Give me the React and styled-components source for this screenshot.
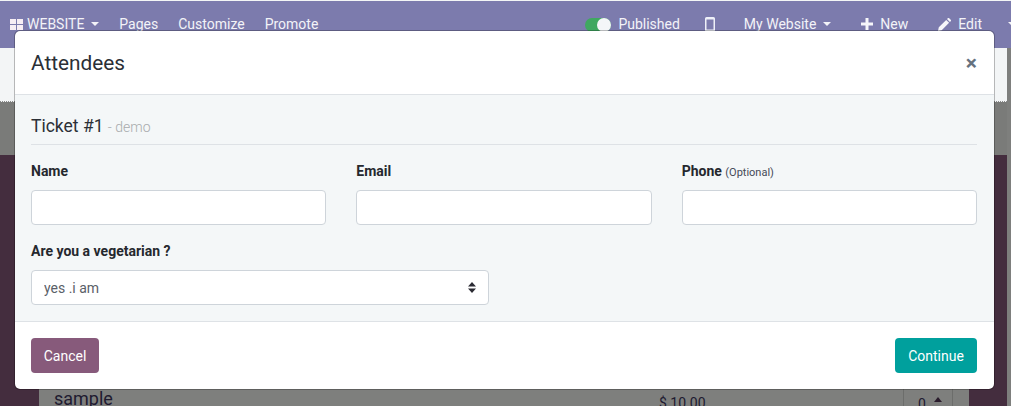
import styled, { createGlobalStyle } from 'styled-components';

const GlobalStyle = createGlobalStyle`
  html, body {
    margin: 0;
    padding: 0;
    background: #fff;
    overflow: hidden;
  }
  * { box-sizing: border-box; }
`;

const Page = styled.div`
  position: relative;
  width: 1011px;
  height: 406px;
  padding-top: 1px;
  overflow: hidden;
  background: #f3f5f6;
  font-family: Roboto, "Liberation Sans", sans-serif;
  font-size: 14px;
  color: #212529;
`;

/* top bar */
const Navbar = styled.nav`
  display: flex;
  align-items: flex-start;
  height: 47px;
  padding: 15px 0 0 10px;
  background: #7c7bad;
  color: #f3f3f8;
  white-space: nowrap;
`;

const NavItem = styled.span`
  display: flex;
  align-items: center;
  gap: ${p => p.$gap || 0}px;
  height: 16px;
  line-height: 16px;
  margin-left: ${p => p.$ml || 0}px;
  flex: none;
`;

const Caret = styled.i`
  display: block;
  width: 0;
  height: 0;
  margin-left: ${p => p.$ml || 7}px;
  border-left: 4px solid transparent;
  border-right: 4px solid transparent;
  border-top: 4px solid #f3f3f8;
`;

const Toggle = styled.span`
  position: relative;
  display: block;
  width: 26px;
  height: 14px;
  margin-top: 2px;
  border-radius: 7px;
  background: #3fa860;
  &::after {
    content: '';
    position: absolute;
    top: 0;
    right: 0;
    width: 14px;
    height: 14px;
    border-radius: 50%;
    background: #f4f6f8;
  }
`;

/* page behind the dialog */
const Backdrop = styled.div`
  display: flex;
  height: 358px;
  background: #7e7f7d;
`;

const Column = styled.div`
  display: flex;
  flex-direction: column;
  width: 1007px;
`;

const Banner = styled.div`
  flex: none;
  height: 54px;
  background: #f3f5f6;
  border-bottom: 1px dotted #8b8b8b;
`;

const Band = styled.div`
  flex: none;
  height: 53px;
  background: #7a7b79;
`;

const Main = styled.main`
  flex: 1;
  min-height: 0;
  padding: 0 38px 0 39px;
  background: #442d3e;
`;

const Card = styled.div`
  display: flex;
  align-items: flex-start;
  height: 100%;
  padding: 233px 16px 0 15px;
  background: #7e7f7d;
  color: #201a30;
`;

const RowName = styled.span`
  width: 605px;
  font-size: 18px;
  line-height: 21px;
`;

const RowPrice = styled.span`
  width: 244px;
  padding-top: 7px;
  line-height: 16px;
`;

const QtyBox = styled.span`
  display: flex;
  align-items: flex-start;
  gap: 8px;
  width: 50px;
  height: 30px;
  margin-top: -7px;
  padding: 14px 0 0 14px;
  border: 1px solid #6c6d6b;
  border-bottom: 0;
  line-height: 16px;
`;

const QtyArrow = styled.i`
  display: block;
  width: 0;
  height: 0;
  margin-top: 1px;
  border-left: 4px solid transparent;
  border-right: 4px solid transparent;
  border-bottom: 5px solid #2a1c2c;
`;

/* dialog */
const Modal = styled.div`
  position: absolute;
  top: 30px;
  left: 14px;
  display: flex;
  flex-direction: column;
  width: 981px;
  height: 360px;
  background: #fff;
  background-clip: padding-box;
  border: 1px solid rgba(0, 0, 0, 0.25);
  border-radius: 6px;
`;

const ModalHeader = styled.header`
  display: flex;
  align-items: center;
  justify-content: space-between;
  height: 64px;
  padding: 0 17px 0 16px;
  border-bottom: 1px solid #dee2e6;
`;

const ModalTitle = styled.h4`
  margin: 0;
  font-size: 20.8px;
  font-weight: 400;
  line-height: 28px;
  color: #2b2f36;
`;

const Close = styled.button`
  padding: 2px 0 0;
  border: 0;
  background: none;
  font-family: inherit;
  font-size: 21px;
  font-weight: 700;
  line-height: 21px;
  color: #66727f;
`;

const ModalBody = styled.div`
  height: 227px;
  padding: 16px 17px 0 16px;
  background: #f4f7f8;
  border-bottom: 1px solid #dee2e6;
`;

const TicketTitle = styled.h5`
  margin: 0 0 16px;
  height: 34px;
  padding-top: 4px;
  font-size: 17.5px;
  font-weight: 400;
  line-height: 22px;
  color: #2b2f36;
  border-bottom: 1px solid #dee2e6;
`;

const TicketNote = styled.small`
  font-size: 14px;
  font-weight: 300;
  color: #a8abad;
`;

const FieldGrid = styled.div`
  display: grid;
  grid-template-columns: repeat(3, 1fr);
  gap: 26px 30px;
`;

const Field = styled.div`
  display: flex;
  flex-direction: column;
  gap: 12px;
  width: ${p => p.$width || 'auto'};
  margin-top: ${p => p.$mt || 0}px;
`;

const Label = styled.label`
  height: 17px;
  font-weight: 700;
  line-height: 20px;
  color: #25282e;
`;

const Optional = styled.small`
  font-size: 11px;
  font-weight: 400;
  color: #454a57;
`;

const Input = styled.input`
  width: 100%;
  height: 35px;
  padding: 0 12px;
  background: #fff;
  border: 1px solid #ced4da;
  border-radius: 4px;
  outline: none;
`;

const SelectWrap = styled.div`
  position: relative;
  height: 35px;
`;

const Select = styled.select`
  appearance: none;
  width: 100%;
  height: 35px;
  padding: 0 12px;
  background: #fff;
  border: 1px solid #ced4da;
  border-radius: 4px;
  font-family: inherit;
  font-size: 14px;
  color: #5a6068;
  outline: none;
`;

const SelectArrows = styled.svg`
  position: absolute;
  top: 12px;
  right: 13px;
  width: 8px;
  height: 11px;
  pointer-events: none;
`;

const ModalFooter = styled.footer`
  display: flex;
  align-items: center;
  justify-content: space-between;
  flex: 1;
  padding: 0 17px 0 16px;
`;

const Button = styled.button`
  width: ${p => p.$width}px;
  height: 35px;
  padding: 0;
  border: 0;
  border-radius: 4px;
  background: ${p => p.$bg};
  color: #fff;
  font-family: inherit;
  font-size: 14px;
`;

const App = () => {
  return (
    <Page>
      <GlobalStyle />
      <Navbar>
        <NavItem $gap={4}>
          <svg width="13" height="11" viewBox="0 0 13 11">
            <path fill="#f6eef4" d="M0 0h6v5H0zM7 0h6v5H7zM0 6h6v5H0zM7 6h6v5H7z" />
          </svg>
          WEBSITE
          <Caret $ml={3} />
        </NavItem>
        <NavItem $ml={20}>Pages</NavItem>
        <NavItem $ml={20}>Customize</NavItem>
        <NavItem $ml={20}>Promote</NavItem>
        <NavItem $ml={267} $gap={7}>
          <Toggle />
          Published
        </NavItem>
        <NavItem $ml={25}>
          <svg width="10" height="15" viewBox="0 0 10 15">
            <path fill="#eef0f8" fillRule="evenodd" d="M1.5 0h7A1.5 1.5 0 0 1 10 1.500v12A1.500 1.500 0 0 1 8.500 15h-7A1.500 1.500 0 0 1 0 13.500v-12A1.500 1.500 0 0 1 1.500 0zM1.500 2.500v10h7v-10z" />
          </svg>
        </NavItem>
        <NavItem $ml={29}>
          My Website
          <Caret />
        </NavItem>
        <NavItem $ml={30} $gap={7}>
          <svg width="12" height="12" viewBox="0 0 12 12">
            <path fill="#f6f6fa" d="M4.500 0h3v4.500H12v3H7.500V12h-3V7.500H0v-3h4.500z" />
          </svg>
          New
        </NavItem>
        <NavItem $ml={30} $gap={7}>
          <svg width="13" height="13" viewBox="0 0 13 13">
            <path fill="#f6f6fa" d="M0 13l.8-3.700L8.200 1.900l2.900 2.900-7.400 7.400zM9 1.100l.8-.8a1 1 0 0 1 1.400 0l1.500 1.500a1 1 0 0 1 0 1.400l-.8.8z" />
          </svg>
          Edit
        </NavItem>
        <NavItem>
          <Caret $ml={26} />
        </NavItem>
      </Navbar>

      <Backdrop>
        <Column>
          <Banner />
          <Band />
          <Main>
            <Card>
              <RowName>sample</RowName>
              <RowPrice>$ 10.00</RowPrice>
              <QtyBox>
                0
                <QtyArrow />
              </QtyBox>
            </Card>
          </Main>
        </Column>
      </Backdrop>

      <Modal>
        <ModalHeader>
          <ModalTitle>Attendees</ModalTitle>
          <Close>×</Close>
        </ModalHeader>
        <ModalBody>
          <TicketTitle>
            Ticket #1 <TicketNote>- demo</TicketNote>
          </TicketTitle>
          <FieldGrid>
            <Field>
              <Label>Name</Label>
              <Input type="text" />
            </Field>
            <Field>
              <Label>Email</Label>
              <Input type="text" />
            </Field>
            <Field>
              <Label>
                Phone <Optional>(Optional)</Optional>
              </Label>
              <Input type="text" />
            </Field>
          </FieldGrid>
          <Field $width="458px" $mt={16}>
            <Label>Are you a vegetarian ?</Label>
            <SelectWrap>
              <Select defaultValue="yes">
                <option value="yes">yes .i am</option>
              </Select>
              <SelectArrows viewBox="0 0 8 11">
                <path fill="#2b2b33" d="M4 0l4 4.500H0zM0 6.500h8L4 11z" />
              </SelectArrows>
            </SelectWrap>
          </Field>
        </ModalBody>
        <ModalFooter>
          <Button $width={68} $bg="#875a7b">Cancel</Button>
          <Button $width={82} $bg="#00a09d">Continue</Button>
        </ModalFooter>
      </Modal>
    </Page>
  );
};

export default App;
